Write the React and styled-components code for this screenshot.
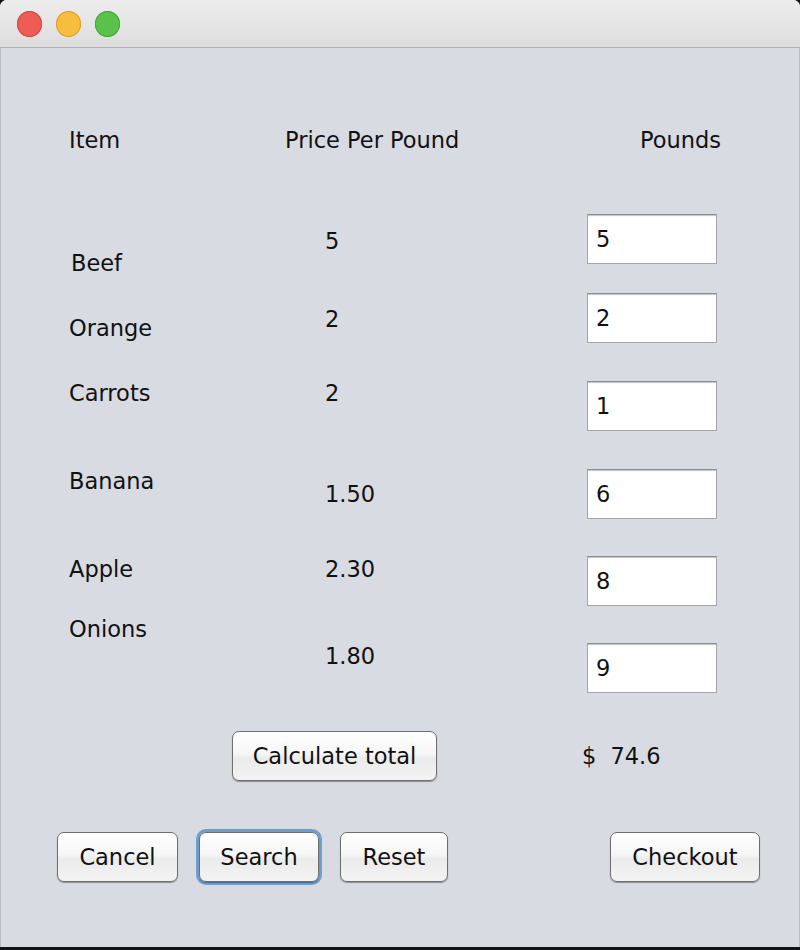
import React, { useState } from 'react';
import styled, { createGlobalStyle } from 'styled-components';

const GlobalStyle = createGlobalStyle`
  html, body {
    margin: 0;
    padding: 0;
    background: #141414;
  }
  * {
    box-sizing: border-box;
  }
`;

const items = [
  { name: 'Beef', price: '5', pounds: '5', gap: 62, nameY: 36, priceY: 14 },
  { name: 'Orange', price: '2', pounds: '2', gap: 29, nameY: 22, priceY: 13 },
  { name: 'Carrots', price: '2', pounds: '1', gap: 38, nameY: -1, priceY: -1 },
  { name: 'Banana', price: '1.50', pounds: '6', gap: 38, nameY: -1, priceY: 12 },
  { name: 'Apple', price: '2.30', pounds: '8', gap: 37, nameY: 0, priceY: 0 },
  { name: 'Onions', price: '1.80', pounds: '9', gap: 37, nameY: -27, priceY: 0 },
];

function App() {
  const [pounds, setPounds] = useState(items.map((i) => i.pounds));

  const updatePounds = (idx, value) => {
    const next = [...pounds];
    next[idx] = value;
    setPounds(next);
  };

  return (
    <>
      <GlobalStyle />
      <Window>
        <TitleBar>
          <Light $color="#ee5d55" $edge="#d6463f" />
          <Light $color="#f7bd3c" $edge="#dc9f2f" />
          <Light $color="#5ac24a" $edge="#44a535" />
        </TitleBar>
        <Content>
          <HeaderRow>
            <Label $dy={1}>Item</Label>
            <Label $dy={1}>Price Per Pound</Label>
            <Label $dy={1} $indent={53}>Pounds</Label>
          </HeaderRow>

          {items.map((item, idx) => (
            <ItemRow key={item.name} $gap={item.gap}>
              <Label $dy={item.nameY} $indent={item.name === 'Beef' ? 2 : 0}>{item.name}</Label>
              <Label $dy={item.priceY} $indent={40}>{item.price}</Label>
              <PoundsInput
                type="text"
                value={pounds[idx]}
                onChange={(e) => updatePounds(idx, e.target.value)}
              />
            </ItemRow>
          ))}

          <TotalRow>
            <MacButton $width={205}>Calculate total</MacButton>
            <Total>$ 74.6</Total>
          </TotalRow>

          <ActionRow>
            <MacButton $width={121}>Cancel</MacButton>
            <MacButton $width={120} $focused>Search</MacButton>
            <MacButton $width={108}>Reset</MacButton>
            <Spacer />
            <MacButton $width={150}>Checkout</MacButton>
          </ActionRow>
        </Content>
      </Window>
    </>
  );
}

const Window = styled.div`
  width: 800px;
  height: 947px;
  background: #d8dbe1;
  border-radius: 7px 7px 0 0;
  overflow: hidden;
  box-shadow: inset 1px 0 0 #b9bcc2, inset -1px 0 0 #b9bcc2;
  font-family: "DejaVu Sans", "Liberation Sans", sans-serif;
  color: #111;
`;

const TitleBar = styled.div`
  height: 48px;
  display: flex;
  align-items: center;
  gap: 14px;
  padding-left: 17px;
  background: linear-gradient(#ececec, #e4e4e4 60%, #dcdcdc);
  border-bottom: 1px solid #b0b0b0;
`;

const Light = styled.span`
  width: 25px;
  height: 26px;
  border-radius: 50%;
  background: ${(p) => p.$color};
  box-shadow: inset 0 0 0 1px ${(p) => p.$edge};
`;

const Content = styled.div`
  padding: 78px 40px 0 69px;
  font-size: 22.5px;
`;

const HeaderRow = styled.div`
  display: grid;
  grid-template-columns: 216px 302px 1fr;
  height: 26px;
`;

const ItemRow = styled.div`
  display: grid;
  grid-template-columns: 216px 302px 1fr;
  align-items: start;
  height: 50px;
  margin-top: ${(p) => p.$gap}px;
`;

const Label = styled.div`
  line-height: 26px;
  white-space: nowrap;
  margin-top: ${(p) => p.$dy || 0}px;
  padding-left: ${(p) => p.$indent || 0}px;
`;

const PoundsInput = styled.input`
  width: 130px;
  height: 50px;
  margin: 0;
  padding: 0 8px;
  font-family: inherit;
  font-size: 22.5px;
  color: #111;
  background: #fff;
  border: 1px solid #a4a6aa;
  border-top-color: #8c8c8c;
  box-shadow: inset 0 2px 1px -1px #c4c4c4;
  border-radius: 0;
  outline: none;
`;

const TotalRow = styled.div`
  display: flex;
  align-items: center;
  margin-top: 38px;
  padding-left: 163px;
  gap: 145px;
`;

const Total = styled.div`
  line-height: 26px;
  white-space: pre;
  word-spacing: 7px;
`;

const ActionRow = styled.div`
  display: flex;
  align-items: center;
  gap: 21px;
  margin: 51px 0 0 -12px;
`;

const Spacer = styled.div`
  flex: 1;
`;

const MacButton = styled.button`
  width: ${(p) => p.$width}px;
  height: 50px;
  padding: 0;
  font-family: inherit;
  font-size: 22.5px;
  color: #111;
  border: 1px solid #6e6e6e;
  border-radius: 7px;
  background: linear-gradient(#ffffff, #f6f6f6 45%, #ebebeb 55%, #f3f3f3);
  box-shadow: 0 1px 1px rgba(0, 0, 0, 0.35)
    ${(p) => (p.$focused ? ', 0 0 0 3px #6f9fd2' : '')};
  cursor: pointer;
`;

export default App;
